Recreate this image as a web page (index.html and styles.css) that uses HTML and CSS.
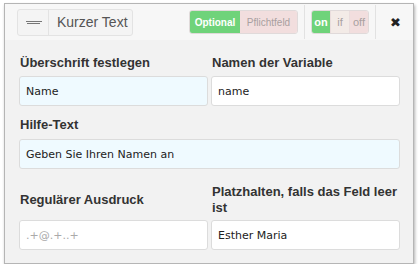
FILE: index.html
```html
<!DOCTYPE html>
<html lang="de">
<head>
    <meta charset="UTF-8">
    <title>Kurzer Text</title>
    <link rel="stylesheet" href="styles.css">
</head>
<body>
    <div class="panel">
        <div class="panel-head">
            <div class="drag">
                <span class="drag-icon"><span></span><span></span></span>
                <span class="drag-title">Kurzer Text</span>
            </div>
            <div class="toggle">
                <span class="opt wide active">Optional</span>
                <span class="opt wider pink">Pflichtfeld</span>
            </div>
            <div class="sep"></div>
            <div class="toggle">
                <span class="opt small active">on</span>
                <span class="opt small beige">if</span>
                <span class="opt small pink">off</span>
            </div>
            <div class="sep"></div>
            <span class="close">&#10006;</span>
        </div>
        <div class="panel-body">
            <div class="row">
                <div class="field">
                    <label for="title">Überschrift festlegen</label>
                    <input type="text" id="title" class="hint" value="Name">
                </div>
                <div class="field">
                    <label for="varname">Namen der Variable</label>
                    <input type="text" id="varname" value="name">
                </div>
            </div>
            <div class="field full">
                <label for="help">Hilfe-Text</label>
                <input type="text" id="help" class="hint" value="Geben Sie Ihren Namen an">
            </div>
            <div class="row last">
                <div class="field">
                    <label for="regex">Regulärer Ausdruck</label>
                    <input type="text" id="regex" placeholder=".+@.+..+">
                </div>
                <div class="field">
                    <label for="placeholder">Platzhalten, falls das Feld leer ist</label>
                    <input type="text" id="placeholder" value="Esther Maria">
                </div>
            </div>
        </div>
    </div>
</body>
</html>
```

FILE: styles.css
```css
body {
    margin: 0;
    padding: 3px 0 0 4px;
    background-color: white;
    font-family: "Liberation Sans", Arial, sans-serif;
}
.panel {
    width: 408px;
    height: 259px;
    border: 1px solid #b5b5b5;
    background-color: #f2f2f2;
    box-shadow: 1px 2px 3px rgba(0, 0, 0, 0.3);
}
.panel-head {
    display: flex;
    align-items: center;
    height: 36px;
    padding: 0 0 0 12px;
    background-color: #f7f7f7;
}
.drag {
    display: flex;
    align-items: center;
    width: 114px;
    height: 25px;
    border: 1px solid #e3e3e3;
    border-radius: 3px;
    background-color: #f4f4f4;
    margin-right: 56px;
}
.drag-icon {
    display: flex;
    flex-direction: column;
    justify-content: center;
    gap: 1px;
    width: 31px;
    height: 100%;
    padding-left: 8px;
    box-sizing: border-box;
    border-right: 1px solid #e3e3e3;
}
.drag-icon span {
    display: block;
    width: 16px;
    height: 1px;
    background-color: #777;
}
.drag-icon span + span {
    width: 13px;
    margin-left: 1px;
}
.drag-title {
    padding-left: 8px;
    font-size: 14px;
    color: #555;
}
.toggle {
    display: flex;
    height: 24px;
    border-radius: 3px;
    overflow: hidden;
    border: 1px solid #e0dada;
    box-sizing: border-box;
}
.opt {
    display: flex;
    align-items: center;
    justify-content: center;
    box-sizing: border-box;
    font-size: 10px;
    color: #a8a0a0;
}
.opt.wide {
    width: 50px;
}
.opt.wider {
    width: 57px;
}
.opt.small {
    width: 19px;
    font-size: 11px;
    border-left: 1px solid #eadddd;
}
.opt.small:first-child {
    width: 18px;
    border-left: none;
}
.opt.active {
    background-color: #6fd37a;
    color: white;
    font-weight: bold;
}
.opt.pink {
    background-color: #f2dede;
}
.opt.beige {
    background-color: #f3ebe7;
}
.sep {
    width: 1px;
    height: 34px;
    background-color: #e2e2e2;
    margin: 0 6px;
}
.close {
    flex: 1;
    text-align: center;
    font-size: 13px;
    color: #222;
    margin-right: 4px;
}
.panel-body {
    padding: 15px 13px 0 14px;
}
.row {
    display: grid;
    grid-template-columns: 1fr 1fr;
    column-gap: 3px;
}
.field label {
    display: block;
    font-size: 13px;
    font-weight: bold;
    line-height: 16px;
    color: #333;
    margin: 0 0 5px 1px;
}
.field input {
    display: block;
    width: 100%;
    height: 30px;
    box-sizing: border-box;
    padding: 0 6px;
    border: 1px solid #dcdcdc;
    border-radius: 3px;
    background-color: white;
    font-family: "DejaVu Sans", Verdana, sans-serif;
    font-size: 11px;
    color: #222;
}
.field input::placeholder {
    color: #aaa;
}
.field input.hint {
    background-color: #effaff;
}
.field.full {
    margin-top: 11px;
}
.field.full label {
    margin-bottom: 6px;
}
.row.last {
    margin-top: 15px;
}
.row.last .field {
    display: flex;
    flex-direction: column;
}
.row.last label {
    flex: 1;
    display: flex;
    align-items: center;
    margin-bottom: 4px;
}
```
